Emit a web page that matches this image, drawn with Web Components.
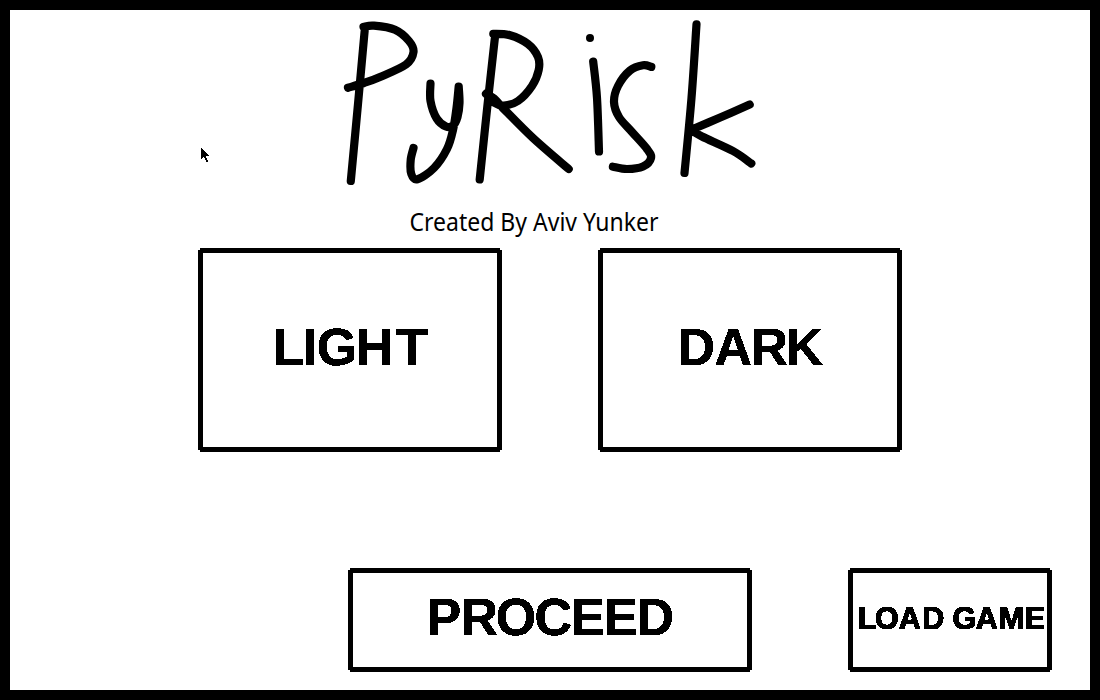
<!DOCTYPE html>
<html lang="en">
<head>
<meta charset="utf-8">
<title>PyRisk</title>
<style>
  html, body { margin: 0; background: #fff; overflow: hidden; }
</style>
</head>
<body>
<risk-menu>
  <risk-logo slot="title"></risk-logo>
  <risk-credit slot="title">Created By Aviv Yunker</risk-credit>
  <risk-button slot="themes" width="304" height="204" size="52" baseline="117" edges="78 108 121 161 199">LIGHT</risk-button>
  <risk-button slot="themes" width="304" height="204" size="52" baseline="117" edges="83 117 156 191">DARK</risk-button>
  <risk-button slot="actions" width="404" height="104" size="52" baseline="67" edges="82 116 150 189 226 259 292">PROCEED</risk-button>
  <risk-button slot="actions" width="204" height="104" size="30.5" weight="1.2" baseline="60.5" edges="11.5 28.3 51 76.3 98 105.8 128 152.8 178.5">LOAD GAME</risk-button>
  <risk-cursor slot="pointer"></risk-cursor>
</risk-menu>
<script>
class RiskMenu extends HTMLElement {
  constructor() {
    super();
    this.attachShadow({ mode: 'open' }).innerHTML = `
      <style>
        :host { display: flex; flex-direction: column; position: relative; box-sizing: border-box;
                width: 1100px; height: 700px; border: 10px solid #000; background: #fff; }
        header { height: 238px; display: flex; flex-direction: column; }
        .themes { display: flex; justify-content: center; gap: 96px; }
        .actions { display: flex; gap: 96px; margin-top: 116px; padding-left: 338px; }
      </style>
      <header><slot name="title"></slot></header>
      <div class="themes"><slot name="themes"></slot></div>
      <div class="actions"><slot name="actions"></slot></div>
      <slot name="pointer"></slot>`;
  }
}

// Hand-drawn wordmark: every stroke is a smooth curve through its points.
const STROKES = [
  [[365,27],[358,104],[350.8,181]],
  [[363.5,26.8],[374,25.7],[395,29.8],[409,41],[413.5,52],[406,64.5],[380,77],[364,83],[348,87.7]],
  [[430.5,83.5],[430.5,101],[436.7,118.5],[446,126.5],[453,125.5],[457.5,117],[459.5,103],[458.7,86.5]],
  [[458.7,86.5],[456.5,108],[453,130],[447,149],[434,168],[417.5,179.3],[411.3,174],[410.7,160],[413.5,148]],
  [[495.3,34],[487.5,105],[479.7,179.5]],
  [[493.3,33.8],[510,35.2],[528,44],[538,57],[538.7,70],[532,86],[518,101],[504,105.5],[494,102.5],[486,93.7]],
  [[486,94],[494,98.5],[502,107],[533,138],[568.7,169]],
  [[593.2,61.5],[597,98],[599,151.5]],
  [[651.3,66.9],[643,65.3],[630,70.5],[618,86],[614,102],[619,117],[632,132],[647,149],[651,158],[643,166.5],[627,169],[612.9,166.7]],
  [[696.5,24.3],[691.5,98],[684.5,173]],
  [[749.7,104.6],[719,118],[689,130.7]],
  [[690,129.5],[702,136.5],[733,151],[751.3,163.5]],
];
function smooth(p) {
  let d = `M${p[0]}`;
  for (let i = 0; i < p.length - 1; i++) {
    const a = p[i - 1] || p[i], b = p[i], c = p[i + 1], e = p[i + 2] || c;
    d += `C${b[0] + (c[0] - a[0]) / 6} ${b[1] + (c[1] - a[1]) / 6} ${c[0] - (e[0] - b[0]) / 6} ${c[1] - (e[1] - b[1]) / 6} ${c[0]} ${c[1]}`;
  }
  return d;
}
class RiskLogo extends HTMLElement {
  constructor() {
    super();
    this.attachShadow({ mode: 'open' }).innerHTML = `
      <style>:host { display: block; height: 190px; } svg { display: block; margin: 0 auto; }</style>
      <svg width="440" height="190" viewBox="330 10 440 190" role="img" aria-label="PyRisk">
        <path d="${STROKES.map(smooth).join('')}" fill="none" stroke="#000" stroke-width="8.2" stroke-linecap="round" stroke-linejoin="round"/>
        <circle cx="590" cy="38" r="4"/>
      </svg>`;
  }
}

class RiskCredit extends HTMLElement {
  connectedCallback() {
    this.attachShadow({ mode: 'open' }).innerHTML = `
      <style>:host { display: block; padding-left: 390px; }
        svg { display: block; } text { font: 25px "Noto Sans", sans-serif; }</style>
      <svg width="280" height="48" viewBox="0 0 280 48">
        <text x="9.5" y="31" textLength="249" lengthAdjust="spacingAndGlyphs">${this.textContent}</text>
      </svg>`;
  }
}

// Left side bearings of the bold capitals, in 1/2048 em.
const BEARING = { A: 20, C: 94, G: 84, O: 84, T: 43, ' ': 0 };
class RiskButton extends HTMLElement {
  connectedCallback() {
    const get = n => this.getAttribute(n);
    const label = this.textContent, size = +get('size');
    const xs = get('edges').split(' ').map((x, i) => (+x - (BEARING[label[i]] ?? 137) * size / 2048).toFixed(2));
    this.attachShadow({ mode: 'open' }).innerHTML = `
      <style>
        :host { display: block; box-sizing: border-box; width: ${get('width')}px; height: ${get('height')}px;
          border: 5px solid #000; background: #fff;
          clip-path: polygon(2px 0, calc(100% - 2px) 0, calc(100% - 2px) 2px, 100% 2px, 100% calc(100% - 2px),
            calc(100% - 2px) calc(100% - 2px), calc(100% - 2px) 100%, 2px 100%, 2px calc(100% - 2px),
            0 calc(100% - 2px), 0 2px, 2px 2px); }
        svg { display: block; width: 100%; height: 100%; }
        text { font: bold ${size}px "Liberation Sans", Arial, sans-serif; white-space: pre;
          stroke: #000; stroke-width: ${get('weight') || 0.5}px; }
      </style>
      <svg viewBox="5 5 ${get('width') - 10} ${get('height') - 10}">
        <filter id="crisp" x="-5%" y="-20%" width="110%" height="140%" color-interpolation-filters="sRGB">
          <feComponentTransfer><feFuncA type="discrete" tableValues="0 1"/></feComponentTransfer>
        </filter>
        <text x="${xs.join(' ')}" y="${get('baseline')}" filter="url(#crisp)">${label}</text>
      </svg>`;
  }
}

class RiskCursor extends HTMLElement {
  constructor() {
    super();
    this.attachShadow({ mode: 'open' }).innerHTML = `
      <style>:host { position: absolute; left: 191px; top: 138px; width: 9px; height: 15px; }
        svg { display: block; }</style>
      <svg width="9" height="15" shape-rendering="crispEdges">
        <path d="M0 -1H1V1H2V2H3V3H4V4H5V5H6V6H7V7H8V8H5V10H6V12H7V14H5V12H4V10H3V9H2V10H1V11H0Z"/>
      </svg>`;
  }
}
customElements.define('risk-menu', RiskMenu);
customElements.define('risk-logo', RiskLogo);
customElements.define('risk-credit', RiskCredit);
customElements.define('risk-button', RiskButton);
customElements.define('risk-cursor', RiskCursor);
</script>
</body>
</html>
